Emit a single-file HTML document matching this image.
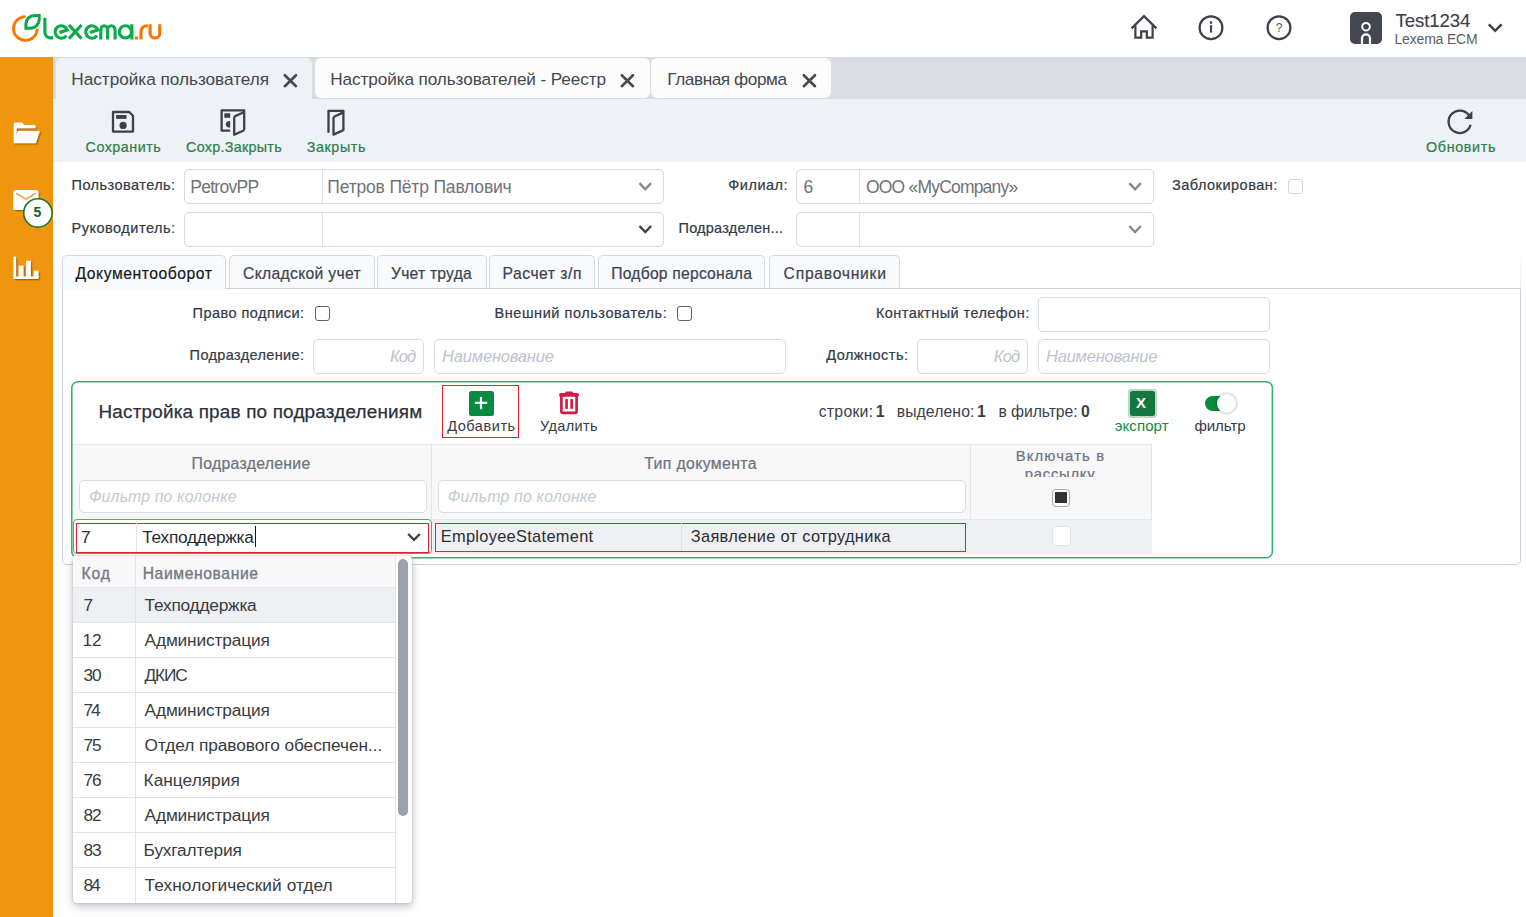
<!DOCTYPE html>
<html><head><meta charset="utf-8"><title>Lexema</title>
<style>
html,body{margin:0;padding:0;}
body{width:1526px;height:917px;overflow:hidden;position:relative;background:#fff;font-family:"Liberation Sans", sans-serif;}
.b{position:absolute;box-sizing:border-box;}
.t{position:absolute;white-space:nowrap;font-family:"Liberation Sans", sans-serif;}
svg{position:absolute;overflow:visible;}
</style></head><body>
<!-- header logo -->
<svg style="left:0;top:0" width="180" height="57" viewBox="0 0 180 57">
  <path d="M25.5 16.6 A11.9 11.9 0 1 0 37.3 28.6" fill="none" stroke="#ff7300" stroke-width="2.8"/>
  <path d="M25.9 28.2 V24 A8.6 8.6 0 0 1 34.5 15.4 H39.2 V19.6 A8.6 8.6 0 0 1 30.6 28.2 Z" fill="none" stroke="#07a945" stroke-width="3" stroke-linejoin="miter"/>
  <g fill="none" stroke="#07ab48" stroke-width="3.1" stroke-linecap="butt">
    <path d="M44.9 17.7 V32.5 A5.4 5.4 0 0 0 50.3 37.9 H53.1"/>
    <path d="M59.5 32.5 L67.2 30 A6.2 6.2 0 1 0 66.4 35.6"/>
    <path d="M69 25 L81.5 38.6 M81.5 25 L69 38.6"/>
    <path d="M90.1 32.5 L97.8 30 A6.2 6.2 0 1 0 97 35.6"/>
    <path d="M100.8 39.5 V30 A3.4 4.3 0 0 1 107.6 30 V39.5 M107.6 30 A3.75 4.3 0 0 1 115.1 30 V39.5"/>
    <path d="M131.9 24.3 V39.5"/><circle cx="125.4" cy="31.85" r="6.1"/>
  </g>
  <g fill="none" stroke="#ff7300" stroke-width="3.1">
    <path d="M141 39.5 V31.5 A5.9 5.75 0 0 1 146.9 25.75 H147.8"/>
    <path d="M150.1 24.2 V33.2 A4.8 4.8 0 0 0 159.7 33.2 V24.2"/>
  </g>
  <rect x="134.7" y="36.5" width="3.3" height="3" fill="#ff7300"/>
</svg>
<!-- header icons -->
<svg style="left:1125px;top:10px" width="40" height="36" viewBox="1125 10 40 36">
  <path d="M1132.4 27.6 L1144 16.2 L1155.6 27.6" fill="none" stroke="#3d414b" stroke-width="2.3" stroke-linecap="square"/>
  <path d="M1135.4 25.5 V37.6 H1141.2 V31.3 H1146.8 V37.6 H1152.6 V25.5" fill="none" stroke="#3d414b" stroke-width="2.2"/>
</svg>
<svg style="left:1190px;top:8px" width="110" height="40" viewBox="1190 8 110 40">
  <circle cx="1211" cy="27.7" r="11.4" fill="none" stroke="#3d414b" stroke-width="2.2"/>
  <circle cx="1211" cy="22.6" r="1.3" fill="#3d414b"/>
  <rect x="1210" y="25.2" width="2.1" height="7.4" fill="#3d414b"/>
  <circle cx="1279" cy="27.7" r="11.4" fill="none" stroke="#3d414b" stroke-width="2.2"/>
  <text x="1279" y="32" font-family="Liberation Sans" font-size="12" fill="#4a4e57" text-anchor="middle">?</text>
</svg>
<div class="b" style="left:1350px;top:12px;width:32px;height:32px;border-radius:5px;background:#434751;overflow:hidden">
  <svg style="left:0;top:0" width="32" height="32" viewBox="0 0 32 32">
    <circle cx="16" cy="14.7" r="3.8" fill="none" stroke="#fff" stroke-width="2"/>
    <path d="M12 33 V26.4 A4 4 0 0 1 20 26.4 V33" fill="none" stroke="#fff" stroke-width="2.2"/>
  </svg>
</div>
<svg style="left:1480px;top:15px" width="30" height="25" viewBox="1480 15 30 25">
  <path d="M1488.8 24.4 L1495.2 30.8 L1501.6 24.4" fill="none" stroke="#3d414b" stroke-width="2.5"/>
</svg>

<!-- sidebar -->
<div class="b" style="left:0;top:57px;width:53px;height:860px;background:#f0960e"></div>
<svg style="left:0;top:57px" width="53" height="300" viewBox="0 57 53 300">
  <defs><filter id="sh" x="-20%" y="-20%" width="150%" height="150%"><feDropShadow dx="1.3" dy="1.3" stdDeviation="0.5" flood-color="#7a4a00" flood-opacity="0.65"/></filter></defs>
  <g filter="url(#sh)" fill="#fff">
    <path d="M13.7 124.2 Q13.7 122.6 15.3 122.6 H22.3 L24.3 124.9 H34.2 Q35.7 124.9 35.7 126.4 V128.3 H16.6 V141.5 L14.9 143.2 Q13.7 143.2 13.7 142 Z"/>
    <path d="M13.7 143.2 L17.8 130.9 H40 L35.9 143.2 Z"/>
  </g>
  <g filter="url(#sh)">
    <rect x="13.2" y="190" width="25.3" height="20" rx="2.6" fill="#fff"/>
    <path d="M16 193.3 L26.2 199.2 L35.6 193.3" fill="none" stroke="#e8a85a" stroke-width="1.6"/>
  </g>
  <g filter="url(#sh)" fill="#fff">
    <rect x="13.5" y="256.7" width="2.6" height="22.3"/>
    <rect x="13.5" y="276.6" width="25" height="2.4"/>
    <rect x="18.7" y="265.6" width="4.8" height="12"/>
    <rect x="26.1" y="260.7" width="4.8" height="17"/>
    <rect x="33.8" y="270.6" width="4.7" height="7"/>
  </g>
</svg>
<svg style="left:0;top:0" width="60" height="240" viewBox="0 0 60 240"><circle cx="37.9" cy="212.9" r="14.2" fill="#fff" stroke="#1c7a26" stroke-width="1.6"/></svg>
<span class="t" style="left:33.5px;top:205px;font-size:14px;line-height:15px;font-weight:700;color:#16602a">5</span>

<!-- window tab strip -->
<div class="b" style="left:53px;top:57px;width:1473px;height:42px;background:#d9dce2"></div>
<div class="b" style="left:56px;top:58px;width:256px;height:41px;background:#eef1f6;border-radius:6px 6px 0 0"></div>
<div class="b" style="left:315px;top:58px;width:334.5px;height:40px;background:#fcfcfd;border-radius:6px"></div>
<div class="b" style="left:650.7px;top:58px;width:180.3px;height:40px;background:#fcfcfd;border-radius:6px"></div>
<svg style="left:280px;top:70px" width="560" height="22" viewBox="280 70 560 22">
  <g stroke="#454953" stroke-width="2.6" stroke-linecap="round">
    <path d="M284.8 75.2 L296 86.2 M296 75.2 L284.8 86.2"/>
    <path d="M621.8 75.2 L633 86.2 M633 75.2 L621.8 86.2"/>
    <path d="M803.8 75.2 L815 86.2 M815 75.2 L803.8 86.2"/>
  </g>
</svg>
<!-- toolbar -->
<div class="b" style="left:53px;top:99px;width:1473px;height:63px;background:#eef1f6"></div>
<svg style="left:100px;top:100px" width="1400" height="40" viewBox="100 100 1400 40">
  <g fill="none" stroke="#3c404a" stroke-width="2.3" stroke-linejoin="round">
    <path d="M113 112 H129.2 L133 115.8 V131.6 H113 Z"/>
    <path d="M230.2 130.7 H221.6 V110.4 H244.2 V130.2"/>
    <path d="M234.2 116.6 L244.2 112 M234.2 116.6 V134.8 L244.2 130.3"/>
    <path d="M328.5 132.8 V110.9 H343.4 V130.4"/>
    <path d="M333.5 117 L343.4 112.4 M333.5 117 V134.6 L343.4 130.1"/>
    <path d="M1469.3 115.9 A11.2 11.2 0 1 0 1470.6 124.7" stroke-width="2.3"/>
  </g>
  <g fill="#3c404a">
    <rect x="116.1" y="115" width="10.4" height="3.9"/>
    <circle cx="123.1" cy="125.4" r="3.6"/>
    <rect x="224.3" y="113.3" width="5.9" height="4.5"/>
    <path d="M230.2 120.9 A4.4 3.35 0 0 0 230.2 127.6 Z"/>
    <path d="M1464.4 119 L1472.4 119.1 L1472.4 110.9 Z"/>
  </g>
</svg>

<!-- form inputs -->
<div class="b" style="left:184px;top:169px;width:480px;height:35px;border:1px solid #d7dbe4;border-radius:5px;background:#fff"></div>
<div class="b" style="left:322px;top:170px;width:1px;height:33px;background:#dde1e8"></div>
<div class="b" style="left:184px;top:212px;width:480px;height:35px;border:1px solid #d7dbe4;border-radius:5px;background:#fff"></div>
<div class="b" style="left:322px;top:213px;width:1px;height:33px;background:#dde1e8"></div>
<div class="b" style="left:796px;top:169px;width:358px;height:35px;border:1px solid #d7dbe4;border-radius:5px;background:#fff"></div>
<div class="b" style="left:859px;top:170px;width:1px;height:33px;background:#dde1e8"></div>
<div class="b" style="left:796px;top:212px;width:358px;height:35px;border:1px solid #d7dbe4;border-radius:5px;background:#fff"></div>
<div class="b" style="left:859px;top:213px;width:1px;height:33px;background:#dde1e8"></div>
<div class="b" style="left:1288px;top:179px;width:15px;height:15px;border:1px solid #d3d7de;border-radius:3px;background:#fff"></div>
<svg style="left:630px;top:175px" width="520" height="60" viewBox="630 175 520 60">
  <g fill="none" stroke-width="2.4">
    <path d="M639.5 183.2 L645.3 189.3 L651.1 183.2" stroke="#85888e"/>
    <path d="M639.5 226 L645.3 232.1 L651.1 226" stroke="#3d414b"/>
    <path d="M1129.3 183.2 L1135.1 189.3 L1140.9 183.2" stroke="#85888e"/>
    <path d="M1129.3 226 L1135.1 232.1 L1140.9 226" stroke="#85888e"/>
  </g>
</svg>

<!-- sub tabs -->
<div class="b" style="left:62px;top:288px;width:1459px;height:277px;border:1px solid #ccd2dd;border-radius:0 0 5px 5px;background:#fff"></div>
<div class="b" style="left:62px;top:255px;width:164px;height:34px;border:1px solid #d3d8e2;border-bottom:none;border-radius:5px 5px 0 0;background:#f9fafb"></div>
<div class="b" style="left:229px;top:255px;width:146px;height:33px;border:1px solid #d3d8e2;border-bottom:none;border-radius:5px 5px 0 0;background:#f9fafb"></div>
<div class="b" style="left:377px;top:255px;width:110px;height:33px;border:1px solid #d3d8e2;border-bottom:none;border-radius:5px 5px 0 0;background:#f9fafb"></div>
<div class="b" style="left:489px;top:255px;width:106px;height:33px;border:1px solid #d3d8e2;border-bottom:none;border-radius:5px 5px 0 0;background:#f9fafb"></div>
<div class="b" style="left:598px;top:255px;width:167px;height:33px;border:1px solid #d3d8e2;border-bottom:none;border-radius:5px 5px 0 0;background:#f9fafb"></div>
<div class="b" style="left:769px;top:255px;width:131px;height:33px;border:1px solid #d3d8e2;border-bottom:none;border-radius:5px 5px 0 0;background:#f9fafb"></div>

<div class="b" style="left:1520px;top:255px;width:1px;height:34px;background:linear-gradient(#fff,#e3e6ec)"></div>
<!-- tab content fields -->
<div class="b" style="left:315px;top:306px;width:15px;height:15px;border:1.3px solid #5f6166;border-radius:3px;background:#fff"></div>
<div class="b" style="left:677px;top:306px;width:15px;height:15px;border:1.3px solid #5f6166;border-radius:3px;background:#fff"></div>
<div class="b" style="left:1038px;top:297px;width:232px;height:35px;border:1px solid #d7dbe4;border-radius:5px;background:#fff"></div>
<div class="b" style="left:313px;top:339px;width:111px;height:35px;border:1px solid #d7dbe4;border-radius:5px;background:#fff"></div>
<div class="b" style="left:434px;top:339px;width:352px;height:35px;border:1px solid #d7dbe4;border-radius:5px;background:#fff"></div>
<div class="b" style="left:917px;top:339px;width:111px;height:35px;border:1px solid #d7dbe4;border-radius:5px;background:#fff"></div>
<div class="b" style="left:1038px;top:339px;width:232px;height:35px;border:1px solid #d7dbe4;border-radius:5px;background:#fff"></div>

<!-- green panel -->
<svg style="left:0;top:0" width="1526" height="917" viewBox="0 0 1526 917"><rect x="71.8" y="381.8" width="1200.6" height="176" rx="6" fill="#fff" stroke="#3bb26c" stroke-width="1.6"/></svg>
<div class="b" style="left:442px;top:385px;width:77px;height:53px;border:1px solid #e2212b"></div>
<div class="b" style="left:468.5px;top:390.5px;width:25px;height:25px;border-radius:2.5px;background:#048c40"></div>
<svg style="left:460px;top:385px" width="130" height="35" viewBox="460 385 130 35">
  <path d="M474.9 402.9 H487.3 M481 396.9 V409.3" stroke="#fff" stroke-width="2.2"/>
  <rect x="559" y="393" width="20" height="3.7" rx="1.8" fill="#d41a45"/>
  <rect x="565.2" y="391.4" width="7.8" height="3" rx="1.2" fill="#d41a45"/>
  <path d="M561.4 396 V411.2 Q561.4 412.9 563.1 412.9 H574.9 Q576.6 412.9 576.6 411.2 V396" fill="none" stroke="#d41a45" stroke-width="2.7"/>
  <rect x="565.2" y="399" width="2.7" height="10" rx="0.8" fill="#d41a45"/>
  <rect x="570.3" y="399" width="2.7" height="10" rx="0.8" fill="#d41a45"/>
</svg>
<div class="b" style="left:1127.5px;top:388.5px;width:29.5px;height:29.5px;border-radius:3px;background:#b9dbc4"></div>
<div class="b" style="left:1129.5px;top:390.5px;width:25px;height:25px;border-radius:2.5px;background:#14773f"></div>
<span class="t" style="left:1136px;top:395px;font-size:15px;line-height:15px;font-weight:700;color:#fff">X</span>
<div class="b" style="left:1205px;top:396px;width:26px;height:15px;border-radius:8px;background:#0d8a3b"></div>
<div class="b" style="left:1217px;top:394px;width:18.5px;height:18.5px;border-radius:50%;background:#fff;box-shadow:0 0 2px 1px rgba(0,0,0,0.22)"></div>

<!-- grid -->
<div class="b" style="left:72.5px;top:444px;width:1079px;height:75px;background:#f8f8f9;border-top:1px solid #e4e7ed"></div>
<div class="b" style="left:431px;top:445px;width:1px;height:108px;background:#e3e6ec"></div>
<div class="b" style="left:970px;top:445px;width:1px;height:108px;background:#e3e6ec"></div>
<div class="b" style="left:1151px;top:445px;width:1px;height:108px;background:#e3e6ec"></div>
<div class="b" style="left:78.5px;top:479.5px;width:348px;height:33px;border:1px solid #d9dde6;border-radius:5px;background:#fff"></div>
<div class="b" style="left:437.5px;top:479.5px;width:528px;height:33px;border:1px solid #d9dde6;border-radius:5px;background:#fff"></div>
<div class="b" style="left:1052px;top:489px;width:18px;height:17.5px;border:1px solid #a9abb0;border-radius:4px;background:#fff"></div>
<div class="b" style="left:1055.3px;top:492.3px;width:11.5px;height:11px;background:#333"></div>
<div class="b" style="left:72.5px;top:518.5px;width:1079px;height:35px;background:#eff0f3;border-top:1px solid #e4e7ed"></div>
<div class="b" style="left:73px;top:519px;width:359px;height:35px;border:1px solid #3db46e;border-radius:4px;background:#fff"></div>
<div class="b" style="left:76px;top:522.5px;width:353px;height:30px;border:1px solid #e2212b;background:#fff"></div>
<div class="b" style="left:136px;top:523px;width:1px;height:29px;background:#e0e3ea"></div>
<div class="b" style="left:435px;top:522.5px;width:531px;height:29.5px;border:1px solid #e2212b"></div>
<div class="b" style="left:681px;top:523px;width:1px;height:28px;background:#dfe2ea"></div>
<div class="b" style="left:1052px;top:526px;width:19px;height:19.5px;border:1px solid #dfe2e8;border-radius:4px;background:#fff"></div>
<div class="b" style="left:255px;top:526px;width:1.3px;height:21px;background:#111"></div>
<svg style="left:400px;top:525px" width="30" height="25" viewBox="400 525 30 25">
  <path d="M408.2 534 L414 539.8 L419.8 534" fill="none" stroke="#3d414b" stroke-width="2.4"/>
</svg>

<div class="b" style="left:990px;top:462px;width:140px;height:15.1px;overflow:hidden"><span class="t" style="left:34.8px;top:5.4px;font-size:14.8px;line-height:14.8px;color:#6b7280;-webkit-text-stroke:0.22px #6b7280;letter-spacing:0.75px">рассылку</span></div>
<!-- dropdown -->
<div class="b" style="left:73px;top:556px;width:339px;height:347px;background:#fff;border-radius:0 4px 4px 4px;box-shadow:0 0 1.5px rgba(40,50,70,0.35), 0 3px 9px rgba(60,70,90,0.35)"></div>
<div class="b" style="left:73px;top:556px;width:322.5px;height:31.5px;background:#f9f9fa;border-bottom:1px solid #e3e5ea"></div>
<div class="b" style="left:73px;top:587.5px;width:322.5px;height:35px;background:#eff0f3"></div>
<div class="b" style="left:73px;top:657px;width:322.5px;height:1px;background:#e3e5ea"></div>
<div class="b" style="left:73px;top:692px;width:322.5px;height:1px;background:#e3e5ea"></div>
<div class="b" style="left:73px;top:727px;width:322.5px;height:1px;background:#e3e5ea"></div>
<div class="b" style="left:73px;top:762px;width:322.5px;height:1px;background:#e3e5ea"></div>
<div class="b" style="left:73px;top:797px;width:322.5px;height:1px;background:#e3e5ea"></div>
<div class="b" style="left:73px;top:832px;width:322.5px;height:1px;background:#e3e5ea"></div>
<div class="b" style="left:73px;top:867px;width:322.5px;height:1px;background:#e3e5ea"></div>
<div class="b" style="left:73px;top:622px;width:322.5px;height:1px;background:#e3e5ea"></div>
<div class="b" style="left:135.3px;top:556px;width:1px;height:347px;background:#e3e5ea"></div>
<div class="b" style="left:395.3px;top:556px;width:1px;height:347px;background:#e3e5ea"></div>
<div class="b" style="left:398px;top:559px;width:10px;height:256.5px;border-radius:5px;background:#9da1aa"></div>

<span class="t" style="left:1395.50px;top:11.80px;font-size:18.6px;line-height:18.6px;color:#3b3f49;letter-spacing:-0.089px;-webkit-text-stroke:0.15px #3b3f49;">Test1234</span>
<span class="t" style="left:1394.50px;top:31.60px;font-size:14px;line-height:14px;color:#595e68;letter-spacing:-0.183px;">Lexema ECM</span>
<span class="t" style="left:71.30px;top:70.80px;font-size:17.2px;line-height:17.2px;color:#43474f;letter-spacing:-0.020px;">Настройка пользователя</span>
<span class="t" style="left:330.30px;top:70.80px;font-size:17.2px;line-height:17.2px;color:#43474f;letter-spacing:-0.111px;">Настройка пользователей - Реестр</span>
<span class="t" style="left:667.30px;top:70.80px;font-size:17.2px;line-height:17.2px;color:#43474f;letter-spacing:-0.431px;">Главная форма</span>
<span class="t" style="left:85.60px;top:139.80px;font-size:14.3px;line-height:14.3px;color:#2d8048;letter-spacing:0.501px;-webkit-text-stroke:0.22px #2d8048;">Сохранить</span>
<span class="t" style="left:186.10px;top:139.80px;font-size:14.3px;line-height:14.3px;color:#2d8048;letter-spacing:0.300px;-webkit-text-stroke:0.22px #2d8048;">Сохр.Закрыть</span>
<span class="t" style="left:306.70px;top:139.80px;font-size:14.3px;line-height:14.3px;color:#2d8048;letter-spacing:0.614px;-webkit-text-stroke:0.22px #2d8048;">Закрыть</span>
<span class="t" style="left:1426.00px;top:139.80px;font-size:14.3px;line-height:14.3px;color:#2d8048;letter-spacing:0.674px;-webkit-text-stroke:0.22px #2d8048;">Обновить</span>
<span class="t" style="left:71.50px;top:178.10px;font-size:14.5px;line-height:14.5px;color:#343a46;letter-spacing:0.459px;-webkit-text-stroke:0.22px #343a46;">Пользователь:</span>
<span class="t" style="left:71.50px;top:221.30px;font-size:14.5px;line-height:14.5px;color:#343a46;letter-spacing:0.515px;-webkit-text-stroke:0.22px #343a46;">Руководитель:</span>
<span class="t" style="left:728.30px;top:178.10px;font-size:14.5px;line-height:14.5px;color:#343a46;letter-spacing:0.499px;-webkit-text-stroke:0.22px #343a46;">Филиал:</span>
<span class="t" style="left:678.50px;top:221.30px;font-size:14.5px;line-height:14.5px;color:#343a46;letter-spacing:0.219px;-webkit-text-stroke:0.22px #343a46;">Подразделен...</span>
<span class="t" style="left:1172.00px;top:178.10px;font-size:14.5px;line-height:14.5px;color:#343a46;letter-spacing:0.488px;-webkit-text-stroke:0.22px #343a46;">Заблокирован:</span>
<span class="t" style="left:190.20px;top:179.40px;font-size:17.5px;line-height:17.5px;color:#707275;letter-spacing:-0.707px;">PetrovPP</span>
<span class="t" style="left:327.30px;top:179.40px;font-size:17.5px;line-height:17.5px;color:#707275;letter-spacing:-0.179px;">Петров Пётр Павлович</span>
<span class="t" style="left:803.40px;top:179.40px;font-size:17.5px;line-height:17.5px;color:#707275;letter-spacing:0.000px;">6</span>
<span class="t" style="left:866.00px;top:179.40px;font-size:17.5px;line-height:17.5px;color:#707275;letter-spacing:-0.804px;">ООО «MyCompany»</span>
<span class="t" style="left:75.50px;top:266.20px;font-size:15.7px;line-height:15.7px;color:#15171b;letter-spacing:0.544px;-webkit-text-stroke:0.18px #15171b;">Документооборот</span>
<span class="t" style="left:243.10px;top:266.20px;font-size:15.7px;line-height:15.7px;color:#3d4350;letter-spacing:0.304px;-webkit-text-stroke:0.22px #3d4350;">Складской учет</span>
<span class="t" style="left:391.00px;top:266.20px;font-size:15.7px;line-height:15.7px;color:#3d4350;letter-spacing:0.212px;-webkit-text-stroke:0.22px #3d4350;">Учет труда</span>
<span class="t" style="left:502.60px;top:266.20px;font-size:15.7px;line-height:15.7px;color:#3d4350;letter-spacing:0.499px;-webkit-text-stroke:0.22px #3d4350;">Расчет з/п</span>
<span class="t" style="left:611.30px;top:266.20px;font-size:15.7px;line-height:15.7px;color:#3d4350;letter-spacing:0.205px;-webkit-text-stroke:0.22px #3d4350;">Подбор персонала</span>
<span class="t" style="left:783.60px;top:266.20px;font-size:15.7px;line-height:15.7px;color:#3d4350;letter-spacing:0.733px;-webkit-text-stroke:0.22px #3d4350;">Справочники</span>
<span class="t" style="left:192.60px;top:305.80px;font-size:14.5px;line-height:14.5px;color:#343a46;letter-spacing:0.451px;-webkit-text-stroke:0.22px #343a46;">Право подписи:</span>
<span class="t" style="left:494.50px;top:305.80px;font-size:14.5px;line-height:14.5px;color:#343a46;letter-spacing:0.553px;-webkit-text-stroke:0.22px #343a46;">Внешний пользователь:</span>
<span class="t" style="left:875.90px;top:305.80px;font-size:14.5px;line-height:14.5px;color:#343a46;letter-spacing:0.441px;-webkit-text-stroke:0.22px #343a46;">Контактный телефон:</span>
<span class="t" style="left:189.60px;top:347.90px;font-size:14.5px;line-height:14.5px;color:#343a46;letter-spacing:0.364px;-webkit-text-stroke:0.22px #343a46;">Подразделение:</span>
<span class="t" style="left:826.20px;top:347.90px;font-size:14.5px;line-height:14.5px;color:#343a46;letter-spacing:0.488px;-webkit-text-stroke:0.22px #343a46;">Должность:</span>
<span class="t" style="left:389.90px;top:348.40px;font-size:16.5px;line-height:16.5px;color:#bcc3ce;letter-spacing:-0.900px;font-style:italic;">Код</span>
<span class="t" style="left:442.10px;top:348.40px;font-size:16.5px;line-height:16.5px;color:#bcc3ce;letter-spacing:-0.191px;font-style:italic;">Наименование</span>
<span class="t" style="left:993.80px;top:348.40px;font-size:16.5px;line-height:16.5px;color:#bcc3ce;letter-spacing:-0.850px;font-style:italic;">Код</span>
<span class="t" style="left:1046.00px;top:348.40px;font-size:16.5px;line-height:16.5px;color:#bcc3ce;letter-spacing:-0.218px;font-style:italic;">Наименование</span>
<span class="t" style="left:98.50px;top:403.00px;font-size:18.9px;line-height:18.9px;color:#2b313c;letter-spacing:0.191px;-webkit-text-stroke:0.25px #2b313c;">Настройка прав по подразделениям</span>
<span class="t" style="left:447.20px;top:418.90px;font-size:14.5px;line-height:14.5px;color:#353b46;letter-spacing:0.553px;">Добавить</span>
<span class="t" style="left:540.00px;top:418.90px;font-size:14.5px;line-height:14.5px;color:#353b46;letter-spacing:0.383px;">Удалить</span>
<span class="t" style="left:818.70px;top:404.00px;font-size:15.8px;line-height:15.8px;color:#3b414c;letter-spacing:0.260px;">строки:</span>
<span class="t" style="left:875.70px;top:404.00px;font-size:15.8px;line-height:15.8px;color:#3b414c;letter-spacing:0.000px;font-weight:700;">1</span>
<span class="t" style="left:896.70px;top:404.00px;font-size:15.8px;line-height:15.8px;color:#3b414c;letter-spacing:0.070px;">выделено:</span>
<span class="t" style="left:976.90px;top:404.00px;font-size:15.8px;line-height:15.8px;color:#3b414c;letter-spacing:0.000px;font-weight:700;">1</span>
<span class="t" style="left:998.50px;top:404.00px;font-size:15.8px;line-height:15.8px;color:#3b414c;letter-spacing:-0.102px;">в фильтре:</span>
<span class="t" style="left:1081.10px;top:404.00px;font-size:15.8px;line-height:15.8px;color:#3b414c;letter-spacing:0.000px;font-weight:700;">0</span>
<span class="t" style="left:1114.80px;top:417.80px;font-size:15.1px;line-height:15.1px;color:#168a45;letter-spacing:0.041px;">экспорт</span>
<span class="t" style="left:1194.40px;top:417.80px;font-size:15.1px;line-height:15.1px;color:#353b46;letter-spacing:-0.071px;">фильтр</span>
<span class="t" style="left:191.50px;top:456.10px;font-size:15.8px;line-height:15.8px;color:#6b7280;letter-spacing:0.306px;-webkit-text-stroke:0.22px #6b7280;">Подразделение</span>
<span class="t" style="left:644.20px;top:456.10px;font-size:15.8px;line-height:15.8px;color:#6b7280;letter-spacing:0.387px;-webkit-text-stroke:0.22px #6b7280;">Тип документа</span>
<span class="t" style="left:1015.70px;top:448.60px;font-size:14.8px;line-height:14.8px;color:#6b7280;letter-spacing:1.153px;-webkit-text-stroke:0.22px #6b7280;">Включать в</span>
<span class="t" style="left:88.90px;top:488.80px;font-size:15.8px;line-height:15.8px;color:#c3c9d2;letter-spacing:0.161px;font-style:italic;">Фильтр по колонке</span>
<span class="t" style="left:447.80px;top:488.80px;font-size:15.8px;line-height:15.8px;color:#c3c9d2;letter-spacing:0.217px;font-style:italic;">Фильтр по колонке</span>
<span class="t" style="left:80.90px;top:529.00px;font-size:17.3px;line-height:17.3px;color:#2a2c30;letter-spacing:0.000px;">7</span>
<span class="t" style="left:142.30px;top:529.00px;font-size:17.3px;line-height:17.3px;color:#2a2c30;letter-spacing:-0.267px;">Техподдержка</span>
<span class="t" style="left:440.70px;top:527.70px;font-size:16.4px;line-height:16.4px;color:#2a2c30;letter-spacing:0.304px;">EmployeeStatement</span>
<span class="t" style="left:690.80px;top:527.70px;font-size:16.4px;line-height:16.4px;color:#2a2c30;letter-spacing:0.299px;">Заявление от сотрудника</span>
<span class="t" style="left:81.60px;top:566.20px;font-size:15.7px;line-height:15.7px;color:#737984;letter-spacing:0.791px;-webkit-text-stroke:0.35px #737984;">Код</span>
<span class="t" style="left:142.70px;top:566.20px;font-size:15.7px;line-height:15.7px;color:#737984;letter-spacing:0.598px;-webkit-text-stroke:0.35px #737984;">Наименование</span>
<span class="t" style="left:83.40px;top:597.00px;font-size:17.3px;line-height:17.3px;color:#393b40;letter-spacing:0.000px;">7</span>
<span class="t" style="left:144.60px;top:597.00px;font-size:17.3px;line-height:17.3px;color:#393b40;letter-spacing:-0.221px;">Техподдержка</span>
<span class="t" style="left:82.40px;top:632.00px;font-size:17.3px;line-height:17.3px;color:#393b40;letter-spacing:-0.111px;">12</span>
<span class="t" style="left:144.60px;top:632.00px;font-size:17.3px;line-height:17.3px;color:#393b40;letter-spacing:-0.156px;">Администрация</span>
<span class="t" style="left:83.40px;top:667.00px;font-size:17.3px;line-height:17.3px;color:#393b40;letter-spacing:-1.111px;">30</span>
<span class="t" style="left:144.60px;top:667.00px;font-size:17.3px;line-height:17.3px;color:#393b40;letter-spacing:-1.197px;">ДКИС</span>
<span class="t" style="left:83.40px;top:702.00px;font-size:17.3px;line-height:17.3px;color:#393b40;letter-spacing:-2.111px;">74</span>
<span class="t" style="left:144.60px;top:702.00px;font-size:17.3px;line-height:17.3px;color:#393b40;letter-spacing:-0.156px;">Администрация</span>
<span class="t" style="left:83.40px;top:737.00px;font-size:17.3px;line-height:17.3px;color:#393b40;letter-spacing:-1.111px;">75</span>
<span class="t" style="left:144.60px;top:737.00px;font-size:17.3px;line-height:17.3px;color:#393b40;letter-spacing:-0.067px;">Отдел правового обеспечен...</span>
<span class="t" style="left:83.40px;top:772.00px;font-size:17.3px;line-height:17.3px;color:#393b40;letter-spacing:-1.111px;">76</span>
<span class="t" style="left:143.60px;top:772.00px;font-size:17.3px;line-height:17.3px;color:#393b40;letter-spacing:0.015px;">Канцелярия</span>
<span class="t" style="left:83.40px;top:807.00px;font-size:17.3px;line-height:17.3px;color:#393b40;letter-spacing:-1.111px;">82</span>
<span class="t" style="left:144.60px;top:807.00px;font-size:17.3px;line-height:17.3px;color:#393b40;letter-spacing:-0.156px;">Администрация</span>
<span class="t" style="left:83.40px;top:842.00px;font-size:17.3px;line-height:17.3px;color:#393b40;letter-spacing:-1.111px;">83</span>
<span class="t" style="left:143.60px;top:842.00px;font-size:17.3px;line-height:17.3px;color:#393b40;letter-spacing:-0.166px;">Бухгалтерия</span>
<span class="t" style="left:83.40px;top:877.00px;font-size:17.3px;line-height:17.3px;color:#393b40;letter-spacing:-2.111px;">84</span>
<span class="t" style="left:144.60px;top:877.00px;font-size:17.3px;line-height:17.3px;color:#393b40;letter-spacing:0.065px;">Технологический отдел</span>
</body></html>
